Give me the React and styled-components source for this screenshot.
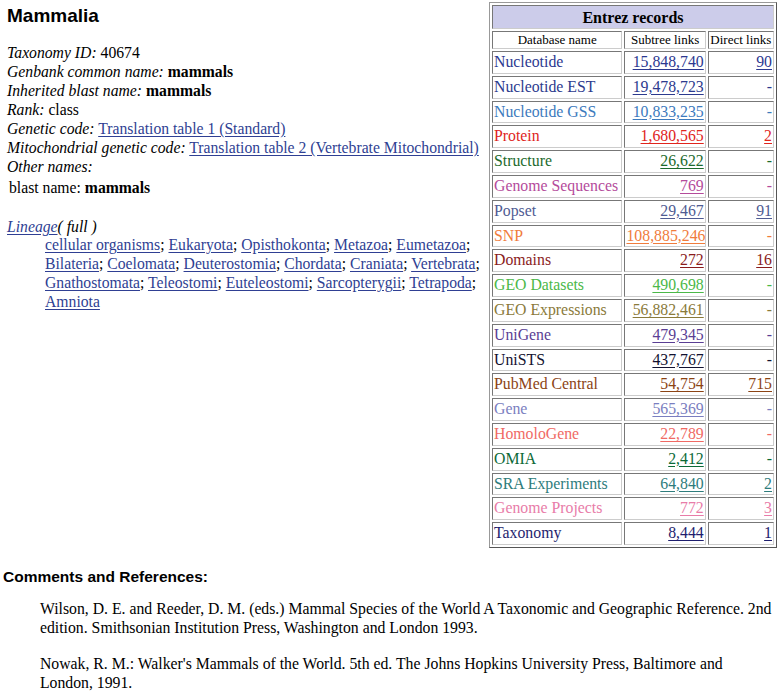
import React from "react";
import styled, { createGlobalStyle } from "styled-components";

const Global = createGlobalStyle`
  html, body { margin: 0; padding: 0; background: #fff; }
  body { font-family: "Liberation Serif", "Times New Roman", serif; color: #000; }
`;

const Page = styled.div`
  padding: 2px 0 0 3px;
  width: 777px;
  box-sizing: border-box;
`;

const Top = styled.div`
  display: flex;
  justify-content: space-between;
  align-items: flex-start;
`;

const Left = styled.div`
  padding-left: 4px;
  flex: 1;
`;

const Title = styled.h1`
  font-family: "Liberation Sans", Arial, sans-serif;
  font-size: 19px;
  font-weight: bold;
  margin: 3px 0 16px 0;
  line-height: 22px;
`;

const Details = styled.div`
  font-size: 15.7px;
  line-height: 19px;
`;

const Line = styled.div``;

const Label = styled.i``;

const Bold = styled.b``;

const Link = styled.a`
  color: #2f3f93;
  text-decoration: underline;
  text-underline-offset: 2px;
`;

const Other = styled.div`
  padding-left: 2px;
  margin-top: 2px;
`;

const Lineage = styled.div`
  font-size: 15.7px;
  line-height: 19px;
  margin-top: 21px;
`;

const LineageHead = styled.div`
  line-height: 17px;
`;

const LineageList = styled.div`
  padding-left: 38px;
  width: 440px;
`;

const Table = styled.table`
  width: 288px;
  border: 1px solid #999;
  border-right-color: #555;
  border-bottom-color: #555;
  border-spacing: 2px;
  font-size: 15.8px;
  table-layout: fixed;
`;

const Col = styled.col`
  width: ${(p) => p.$w}px;
`;

const cellBorder = `
  border: 1px solid #777;
  border-right-color: #ccc;
  border-bottom-color: #ccc;
  box-sizing: border-box;
`;

const Cell = styled.td`
  ${cellBorder}
  padding: 1px 1px 1px 1px;
  line-height: 18.8px;
  white-space: nowrap;
  overflow: hidden;
  text-align: ${(p) => (p.$right ? "right" : "left")};
  color: ${(p) => p.$color || "#000"};
  background: #fff;
`;

const Caption = styled.th`
  ${cellBorder}
  background: #ccccea;
  font-size: 16px;
  font-weight: bold;
  line-height: 19px;
  padding: 2px 0 1px;
`;

const ColHead = styled.th`
  ${cellBorder}
  font-size: 13px;
  font-weight: normal;
  line-height: 14px;
  padding: 1px 0;
  white-space: nowrap;
  overflow: hidden;
  background: #fff;
`;

const NumLink = styled.a`
  color: inherit;
  text-decoration: underline;
  text-underline-offset: 2px;
`;

const Comments = styled.section`
  margin-top: 20px;
`;

const CommentsHead = styled.h3`
  font-family: "Liberation Sans", Arial, sans-serif;
  font-size: 15.5px;
  font-weight: bold;
  margin: 0 0 13px 0;
  line-height: 18px;
`;

const Ref = styled.p`
  font-size: 15.75px;
  line-height: 19px;
  margin: 0 0 17px 37px;
  width: 737px;
`;

const rows = [
  ["Nucleotide", "15,848,740", "90", "#2c3890"],
  ["Nucleotide EST", "19,478,723", "-", "#2c3a8e"],
  ["Nucleotide GSS", "10,833,235", "-", "#3c7abd"],
  ["Protein", "1,680,565", "2", "#e0241c"],
  ["Structure", "26,622", "-", "#1c6a2c"],
  ["Genome Sequences", "769", "-", "#b44b9b"],
  ["Popset", "29,467", "91", "#4f5b92"],
  ["SNP", "108,885,246", "-", "#f07c3c"],
  ["Domains", "272", "16", "#8a1c1c"],
  ["GEO Datasets", "490,698", "-", "#4bb848"],
  ["GEO Expressions", "56,882,461", "-", "#8a7a3a"],
  ["UniGene", "479,345", "-", "#5a3e94"],
  ["UniSTS", "437,767", "-", "#121230"],
  ["PubMed Central", "54,754", "715", "#8c4414"],
  ["Gene", "565,369", "-", "#7a7ec0"],
  ["HomoloGene", "22,789", "-", "#f06a64"],
  ["OMIA", "2,412", "-", "#0c6a38"],
  ["SRA Experiments", "64,840", "2", "#2e7c7c"],
  ["Genome Projects", "772", "3", "#e87ca8"],
  ["Taxonomy", "8,444", "1", "#1e1e6e"],
];

const lineage = [
  "cellular organisms", "Eukaryota", "Opisthokonta", "Metazoa", "Eumetazoa",
  "Bilateria", "Coelomata", "Deuterostomia", "Chordata", "Craniata", "Vertebrata",
  "Gnathostomata", "Teleostomi", "Euteleostomi", "Sarcopterygii", "Tetrapoda",
  "Amniota",
];

export default function App() {
  return (
    <>
      <Global />
      <Page>
        <Top>
          <Left>
            <Title>Mammalia</Title>
            <Details>
              <Line><Label>Taxonomy ID:</Label> 40674</Line>
              <Line><Label>Genbank common name:</Label> <Bold>mammals</Bold></Line>
              <Line><Label>Inherited blast name:</Label> <Bold>mammals</Bold></Line>
              <Line><Label>Rank:</Label> class</Line>
              <Line><Label>Genetic code:</Label> <Link href="#">Translation table 1 (Standard)</Link></Line>
              <Line><Label>Mitochondrial genetic code:</Label> <Link href="#">Translation table 2 (Vertebrate Mitochondrial)</Link></Line>
              <Line><Label>Other names:</Label></Line>
              <Other>blast name: <Bold>mammals</Bold></Other>
            </Details>
            <Lineage>
              <LineageHead><Link href="#"><Label>Lineage</Label></Link><Label>( full )</Label></LineageHead>
              <LineageList>
                {lineage.map((l, i) => (
                  <React.Fragment key={l}>
                    <Link href="#">{l}</Link>
                    {i < lineage.length - 1 ? "; " : ""}
                  </React.Fragment>
                ))}
              </LineageList>
            </Lineage>
          </Left>
          <Table>
            <colgroup>
              <Col $w={130} />
              <Col $w={81} />
              <Col $w={66} />
            </colgroup>
            <tbody>
              <tr>
                <Caption colSpan={3}>Entrez records</Caption>
              </tr>
              <tr>
                <ColHead>Database name</ColHead>
                <ColHead>Subtree links</ColHead>
                <ColHead>Direct links</ColHead>
              </tr>
              {rows.map(([name, sub, direct, color]) => (
                <tr key={name}>
                  <Cell $color={color}>{name}</Cell>
                  <Cell $color={color} $right><NumLink href="#">{sub}</NumLink></Cell>
                  <Cell $color={color} $right>
                    {direct === "-" ? "-" : <NumLink href="#">{direct}</NumLink>}
                  </Cell>
                </tr>
              ))}
            </tbody>
          </Table>
        </Top>
        <Comments>
          <CommentsHead>Comments and References:</CommentsHead>
          <Ref>
            Wilson, D. E. and Reeder, D. M. (eds.) Mammal Species of the World A Taxonomic and Geographic Reference. 2nd edition. Smithsonian Institution Press, Washington and London 1993.
          </Ref>
          <Ref>
            Nowak, R. M.: Walker's Mammals of the World. 5th ed. The Johns Hopkins University Press, Baltimore and<br />
            London, 1991.
          </Ref>
        </Comments>
      </Page>
    </>
  );
}
